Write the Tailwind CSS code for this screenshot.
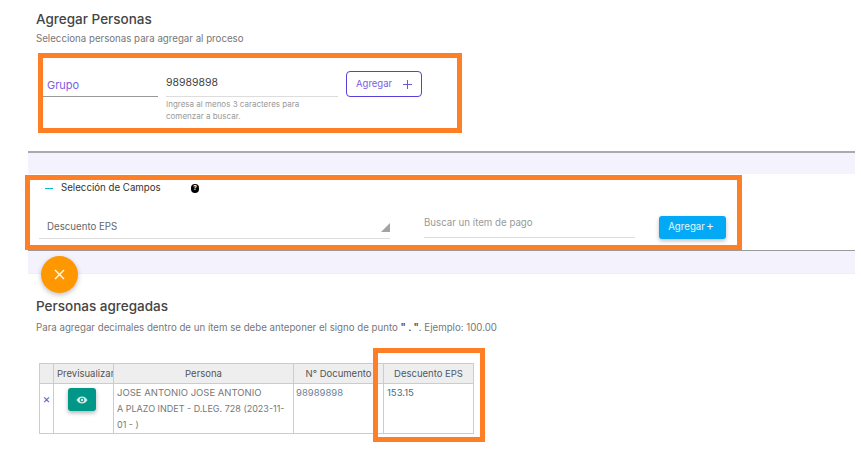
<!DOCTYPE html>
<html>

<head>
    <title>Agregar Personas</title>
    <script src="https://cdn.jsdelivr.net/npm/@tailwindcss/browser@4"></script>
</head>

<body class="bg-white">
    <div class="relative w-[861px] h-[454px] overflow-hidden bg-white font-['Inter',sans-serif] text-[#555]">

        <!-- agregar personas -->
        <div class="h-[151px] pl-[36px]">
            <h2 class="pt-[10px] text-[13.5px] leading-[18px] font-medium text-[#444]">Agregar Personas</h2>
            <p class="mt-[5px] text-[9.7px] leading-[12px] text-[#777]">Selecciona personas para agregar al proceso</p>
            <div class="flex mt-[9px] ml-[7px]">
                <div class="w-[115px] h-[43px] border-b border-[#999] pl-[4px] pt-[24px] text-[11px] leading-[15px] text-[#7c5ce6]">Grupo</div>
                <div class="w-[172px] ml-[8px]">
                    <div class="h-[43px] border-b border-[#ddd] pt-[21px] text-[10.5px] leading-[15px] text-[#444]">98989898</div>
                    <p class="mt-[1px] text-[8px] leading-[12px] text-[#999]">Ingresa al menos 3 caracteres para<br>comenzar a buscar.</p>
                </div>
                <button class="flex items-center ml-[8px] mt-[17px] w-[76px] h-[26px] pl-[9px] border border-[#5b3fd9] rounded-[4px] text-[9.5px] text-[#7c5ce6]">
                    Agregar
                    <svg class="w-[11px] h-[11px] ml-[10px]" viewBox="0 0 11 11" fill="none" stroke="#6a5acd" stroke-width="1">
                        <path d="M5.5 1v9M1 5.5h9" />
                    </svg>
                </button>
            </div>
        </div>

        <!-- bandas y seleccion de campos -->
        <div class="ml-[28px] w-[827px]">
            <div class="h-[23px] bg-[#f3f2fd] border-t-2 border-[#a9a9b0]"></div>
            <div class="h-[77px] bg-white border-b border-[#999]">
                <div class="flex items-center h-[29px] pl-[17px]">
                    <span class="shrink-0 w-[8px] h-[1px] bg-[#00bcd4]"></span>
                    <span class="ml-[8px] text-[9.7px] text-[#333]">Selección de Campos</span>
                    <span class="flex items-center justify-center w-[8.5px] h-[8.5px] ml-[30px] rounded-full bg-black text-[6.5px] font-bold text-white">?</span>
                </div>
                <div class="flex">
                    <div class="relative w-[351px] h-[25px] ml-[11px] mt-[11px] border-b border-[#ddd] pl-[8px] pt-[4px] text-[9.7px] leading-[17px] text-[#666]">
                        Descuento EPS
                        <span class="absolute right-0 top-[9px] w-[9px] h-[9px] bg-[#a3a3a3] [clip-path:polygon(100%_0,100%_100%,0_100%)]"></span>
                    </div>
                    <div class="w-[211px] h-[28px] ml-[34px] mt-[7px] border-b border-[#ddd] pt-[4px] text-[9.7px] leading-[17px] text-[#999]">Buscar un ítem de pago</div>
                    <button class="w-[67px] h-[23px] ml-[24px] mt-[13px] pr-[3px] rounded-[3px] bg-[#03a9f4] text-[9.7px] text-[#e3f6ff] shadow-[0_2px_4px_rgba(0,0,0,0.25)]">Agregar<span class="ml-[1px] text-[12px] leading-[10px]">+</span></button>
                </div>
            </div>
            <div class="h-[23px] bg-[#f3f2fd] border-b border-[#eeeef5]"></div>
        </div>

        <!-- personas agregadas -->
        <div class="pl-[36px]">
            <h2 class="mt-[23px] text-[13.5px] leading-[18px] font-medium text-[#444]">Personas agregadas</h2>
            <p class="mt-[7px] text-[9.7px] leading-[12px] text-[#777]">Para agregar decimales dentro de un ítem se debe anteponer el signo de punto <b class="font-bold text-[#555]">" . "</b>. Ejemplo: 100.00</p>
            <table class="mt-[29px] ml-[3px] w-[435px] table-fixed border-collapse text-[9.5px] leading-[16px] text-[#777]">
                <thead>
                    <tr class="h-[20px] bg-[#eee] text-[#555]">
                        <th class="w-[14px] border border-[#ccc] font-normal"></th>
                        <th class="w-[60px] border border-[#ccc] pl-[3px] font-normal text-left overflow-hidden whitespace-nowrap">Previsualizar</th>
                        <th class="w-[180px] border border-[#ccc] font-normal">Persona</th>
                        <th class="w-[90px] border border-[#ccc] font-normal">N° Documento</th>
                        <th class="w-[90px] border border-[#ccc] font-normal text-[#4a5a6a]">Descuento EPS</th>
                    </tr>
                </thead>
                <tbody>
                    <tr class="h-[48px] align-top">
                        <td class="border border-[#ccc] pt-[7px] text-center text-[12px] leading-[16px] text-[#6a5acd]">×</td>
                        <td class="border border-[#ccc] pt-[4px]">
                            <button class="flex items-center justify-center ml-[14px] w-[28px] h-[23px] rounded-[3px] bg-[#009688] shadow-[0_2px_4px_rgba(0,0,0,0.3)]">
                                <svg class="w-[12px] h-[12px]" viewBox="0 0 24 24" fill="#cdebe7">
                                    <path d="M12 5C7 5 2.7 8.1 1 12c1.7 3.9 6 7 11 7s9.3-3.1 11-7c-1.7-3.9-6-7-11-7zm0 11.5a4.5 4.5 0 1 1 0-9 4.5 4.5 0 0 1 0 9zm0-7a2.5 2.5 0 1 0 0 5 2.5 2.5 0 0 0 0-5z" />
                                </svg>
                            </button>
                        </td>
                        <td class="border border-[#ccc] pl-[3px] pr-[2px] pt-[1px]">JOSE ANTONIO JOSE ANTONIO<br><span class="text-[9px]">A PLAZO INDET - D.LEG. 728 (2023-11-01 - )</span></td>
                        <td class="border border-[#ccc] pl-[2px] pt-[1px] text-[#6b8296]">98989898</td>
                        <td class="border border-[#ccc] pl-[3px] pt-[1px] text-[#4a6a82]">153.15</td>
                    </tr>
                </tbody>
            </table>
        </div>

        <!-- boton flotante -->
        <button class="absolute left-[41px] top-[256px] flex items-center justify-center w-[37px] h-[37px] rounded-full bg-[#ff9800] shadow-[0_2px_5px_rgba(0,0,0,0.25)]">
            <svg class="w-[11px] h-[11px]" viewBox="0 0 11 11" fill="none" stroke="#fff" stroke-width="1.4">
                <path d="M1 1l9 9M10 1l-9 9" />
            </svg>
        </button>

        <!-- recuadros naranja de anotacion -->
        <div class="absolute left-[38px] top-[53px] w-[424px] h-[80px] border-[5px] border-[#ff7f27]"></div>
        <div class="absolute left-[25px] top-[175px] w-[717px] h-[75px] border-[5px] border-[#ff7f27]"></div>
        <div class="absolute left-[373px] top-[348px] w-[112px] h-[94px] border-[5px] border-[#ff7f27]"></div>
    </div>
</body>

</html>
